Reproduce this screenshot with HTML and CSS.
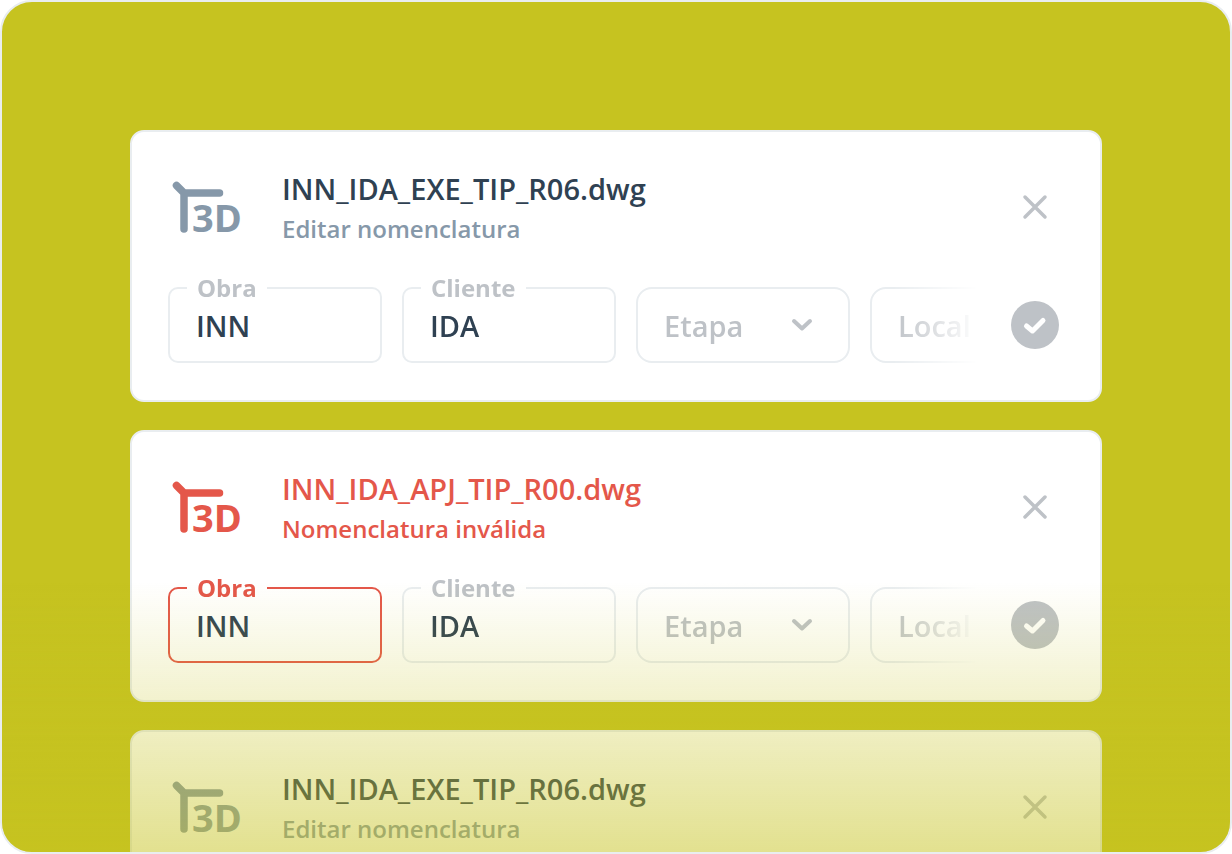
FILE: index.html
```
<!DOCTYPE html>
<html lang="pt-BR">
  <head>
    <meta charset="utf-8">
    <title>Nomenclatura</title>
    <link rel="stylesheet" href="styles.css">
  </head>
  <body>
    <!-- Shared icons -->
    <svg class="sprite" aria-hidden="true">
      <symbol id="icon-3d" viewBox="0 0 76 80">
        <path d="M8.500 16.500 L16 24 H51.500 M16 24 V60" fill="none" stroke="currentColor" stroke-width="7.500" stroke-linecap="round" stroke-linejoin="round" />
        <text x="24" y="63" class="icon-text">3D</text>
      </symbol>
      <symbol id="icon-close" viewBox="0 0 48 48">
        <path d="M14 12 L34 32 M34 12 L14 32" fill="none" stroke="currentColor" stroke-width="3.500" stroke-linecap="round" />
      </symbol>
      <symbol id="icon-check" viewBox="0 0 48 48">
        <path d="M15.500 25 L21.500 30 L32 19.500" fill="none" stroke="currentColor" stroke-width="5" stroke-linecap="round" stroke-linejoin="round" />
      </symbol>
      <symbol id="icon-chevron" viewBox="0 0 24 24">
        <path d="M4 8 L12 15.500 L20 8" fill="none" stroke="currentColor" stroke-width="4" stroke-linecap="round" stroke-linejoin="round" />
      </symbol>
    </svg>

    <main class="board">
      <form class="card">
        <div class="card-header">
          <svg class="file-icon" aria-hidden="true"><use href="#icon-3d" /></svg>
          <div class="file-info">
            <h2>INN_IDA_EXE_TIP_R06.dwg</h2>
            <p>Editar nomenclatura</p>
          </div>
          <button type="button" class="close" aria-label="Fechar"><svg><use href="#icon-close" /></svg></button>
        </div>
        <div class="card-body">
          <div class="fields">
            <div class="field">
              <label for="obra-1">Obra</label>
              <input type="text" id="obra-1" value="INN">
            </div>
            <div class="field">
              <label for="cliente-1">Cliente</label>
              <input type="text" id="cliente-1" value="IDA">
            </div>
            <div class="field">
              <select id="etapa-1" aria-label="Etapa">
                <option>Etapa</option>
              </select>
              <svg class="chevron" aria-hidden="true"><use href="#icon-chevron" /></svg>
            </div>
            <div class="field">
              <select id="local-1" aria-label="Local">
                <option>Local</option>
              </select>
            </div>
          </div>
          <button type="submit" class="confirm" aria-label="Confirmar"><svg><use href="#icon-check" /></svg></button>
        </div>
      </form>

      <form class="card invalid">
        <div class="card-header">
          <svg class="file-icon" aria-hidden="true"><use href="#icon-3d" /></svg>
          <div class="file-info">
            <h2>INN_IDA_APJ_TIP_R00.dwg</h2>
            <p>Nomenclatura inválida</p>
          </div>
          <button type="button" class="close" aria-label="Fechar"><svg><use href="#icon-close" /></svg></button>
        </div>
        <div class="card-body">
          <div class="fields">
            <div class="field error">
              <label for="obra-2">Obra</label>
              <input type="text" id="obra-2" value="INN">
            </div>
            <div class="field">
              <label for="cliente-2">Cliente</label>
              <input type="text" id="cliente-2" value="IDA">
            </div>
            <div class="field">
              <select id="etapa-2" aria-label="Etapa">
                <option>Etapa</option>
              </select>
              <svg class="chevron" aria-hidden="true"><use href="#icon-chevron" /></svg>
            </div>
            <div class="field">
              <select id="local-2" aria-label="Local">
                <option>Local</option>
              </select>
            </div>
          </div>
          <button type="submit" class="confirm" aria-label="Confirmar"><svg><use href="#icon-check" /></svg></button>
        </div>
      </form>

      <form class="card">
        <div class="card-header">
          <svg class="file-icon" aria-hidden="true"><use href="#icon-3d" /></svg>
          <div class="file-info">
            <h2>INN_IDA_EXE_TIP_R06.dwg</h2>
            <p>Editar nomenclatura</p>
          </div>
          <button type="button" class="close" aria-label="Fechar"><svg><use href="#icon-close" /></svg></button>
        </div>
      </form>
    </main>
  </body>
</html>
```
FILE: styles.css
```
* {
  box-sizing: border-box;
}
body {
  margin: 0;
  background-color: #fff;
  font-family: "Open Sans", "Noto Sans", sans-serif;
}
.sprite {
  display: none;
}
.board {
  position: relative;
  display: flex;
  flex-direction: column;
  gap: 28px;
  height: 100vh;
  padding: 128px 128px 0;
  overflow: hidden;
  background-color: #c6c320;
  border: 2px solid #e9edf0;
  border-radius: 32px;
}
/* fades the cards into the board colour */
.board::after {
  content: "";
  position: absolute;
  left: 0;
  right: 0;
  bottom: 0;
  height: 270px;
  background: linear-gradient(rgba(198, 195, 32, 0), rgba(198, 195, 32, 0.5));
  pointer-events: none;
}
.card {
  flex: none;
  padding: 36px 41px 37px 36px;
  background-color: #fff;
  border: 2px solid #e9edf0;
  border-radius: 14px;
}
.card-header {
  display: flex;
  align-items: center;
  color: #8698a9;
}
.file-icon {
  flex: none;
  width: 76px;
  height: 80px;
  margin-right: 38px;
}
.icon-text {
  font-size: 38px;
  font-weight: 700;
  fill: currentColor;
}
.file-info {
  flex: 1;
}
h2 {
  margin: 0;
  color: #2f4152;
  font-size: 29px;
  font-weight: 600;
  line-height: 41px;
}
p {
  margin: 0;
  font-size: 24px;
  font-weight: 600;
  line-height: 40px;
}
button {
  flex: none;
  width: 48px;
  height: 48px;
  padding: 0;
  border: none;
  border-radius: 50%;
  cursor: pointer;
}
button svg {
  display: block;
  width: 48px;
  height: 48px;
}
.close {
  background: none;
  color: #bec2c7;
}
.confirm {
  background-color: #bec2c7;
  color: #fff;
}
.card-body {
  display: flex;
  align-items: flex-end;
  justify-content: space-between;
  margin-top: 18px;
}
.fields {
  display: flex;
  flex: 1;
  gap: 20px;
  min-width: 0;
  margin-right: 33px;
  padding-top: 20px;
  overflow: hidden;
  -webkit-mask-image: linear-gradient(to right, #000 calc(100% - 85px), transparent);
  mask-image: linear-gradient(to right, #000 calc(100% - 85px), transparent);
}
.field {
  position: relative;
  flex: 0 0 214px;
}
.field label {
  position: absolute;
  top: -15px;
  left: 19px;
  padding: 0 10px;
  background-color: #fff;
  color: #bec2c7;
  font-size: 24px;
  font-weight: 700;
  line-height: 32px;
}
input,
select {
  display: block;
  width: 100%;
  height: 76px;
  padding: 0 26px;
  background-color: #fff;
  border: 2px solid #e9edf0;
  border-radius: 10px;
  color: #2f4152;
  font-family: inherit;
  font-size: 29px;
  font-weight: 600;
}
select {
  appearance: none;
  border-radius: 16px;
  color: #bec2c7;
}
.chevron {
  position: absolute;
  top: 26px;
  right: 36px;
  width: 24px;
  height: 24px;
  color: #bec2c7;
  pointer-events: none;
}
.confirm {
  margin-bottom: 14px;
}
.invalid .card-header,
.invalid h2,
.error label {
  color: #e4574a;
}
.invalid .close {
  color: #bec2c7;
}
.error input {
  border-color: #e4574a;
}
```
